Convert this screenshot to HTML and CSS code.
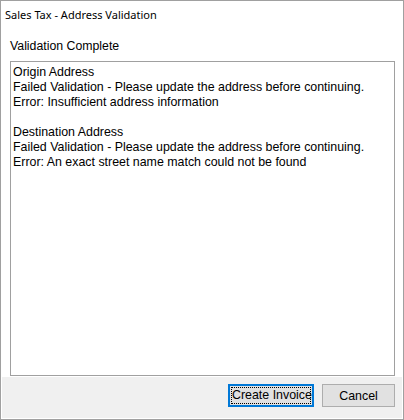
FILE: index.html
```html
<!DOCTYPE html>
<html>
<head>
<meta charset="utf-8">
<link rel="stylesheet" href="styles.css">
</head>
<body>
<div class="dialog">
  <div class="title">Sales Tax - Address Validation</div>
  <div class="heading">Validation Complete</div>
  <div class="box">
    <div class="line">Origin Address</div>
    <div class="line">Failed Validation - Please update the address before continuing.</div>
    <div class="line">Error: Insufficient address information</div>
    <div class="line">&nbsp;</div>
    <div class="line">Destination Address</div>
    <div class="line">Failed Validation - Please update the address before continuing.</div>
    <div class="line">Error: An exact street name match could not be found</div>
  </div>
  <div class="footer">
    <button class="btn primary"><span class="focus">Create Invoice</span></button>
    <button class="btn">Cancel</button>
  </div>
</div>
</body>
</html>
```
FILE: styles.css
```css
html, body {
  margin: 0;
  padding: 0;
  background: #ffffff;
}
.dialog {
  box-sizing: border-box;
  width: 404px;
  height: 420px;
  border: 1px solid #a0a0a0;
  background: #ffffff;
  display: flex;
  flex-direction: column;
  font-family: "Liberation Sans", Arial, sans-serif;
  color: #000;
}
.title {
  font-family: "Noto Sans", "Liberation Sans", sans-serif;
  font-size: 11px;
  height: 16px;
  line-height: 16px;
  padding: 6px 0 0 4px;
}
.heading {
  font-size: 12.3px;
  line-height: 16px;
  padding: 15px 0 0 9px;
  height: 23px;
}
.box {
  box-sizing: border-box;
  margin: 0 8px 0 9px;
  height: 315px;
  border: 1px solid #a0a0a0;
  padding: 3px 2px;
  font-size: 12.4px;
  line-height: 15px;
}
.line {
  white-space: nowrap;
}
.footer {
  margin: 1px;
  flex: 1;
  background: #f0f0f0;
  display: flex;
  justify-content: flex-end;
  align-items: flex-start;
  gap: 8px;
  padding: 7px 7px 0 0;
}
.btn {
  box-sizing: border-box;
  flex: none;
  height: 23px;
  margin: 0;
  padding: 0;
  background: #e1e1e1;
  border: 1px solid #adadad;
  font-family: "Liberation Sans", Arial, sans-serif;
  font-size: 12.4px;
  color: #000;
  width: 73px;
}
.btn.primary {
  width: 86px;
  border: 2px solid #0078d7;
  padding: 1px;
}
.focus {
  display: block;
  height: 100%;
  box-sizing: border-box;
  border: 1px dotted #000;
  line-height: 15px;
  white-space: nowrap;
}
```
